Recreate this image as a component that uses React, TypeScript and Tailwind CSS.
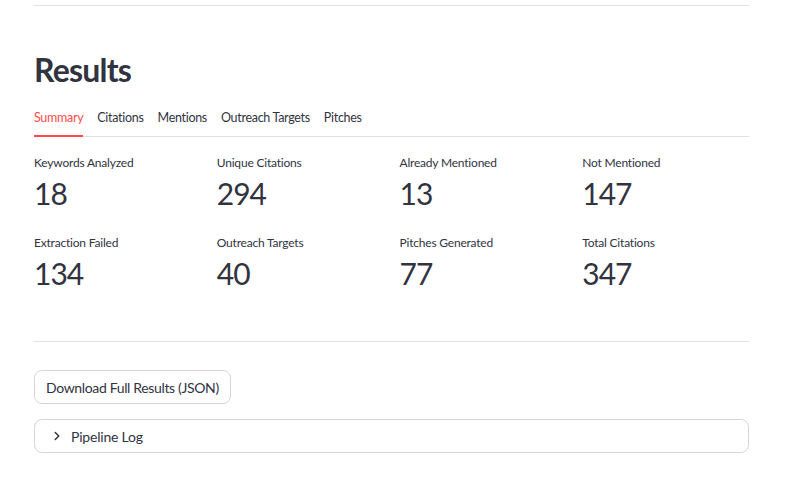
import React from "react";

const metrics = [
  ["Keywords Analyzed", "18"],
  ["Unique Citations", "294"],
  ["Already Mentioned", "13"],
  ["Not Mentioned", "147"],
  ["Extraction Failed", "134"],
  ["Outreach Targets", "40"],
  ["Pitches Generated", "77"],
  ["Total Citations", "347"],
];

const tabs = ["Summary", "Citations", "Mentions", "Outreach Targets", "Pitches"];

export default function App() {
  return (
    <div
      className="min-h-[499px] w-[806px] bg-white text-[#31333f]"
      style={{ fontFamily: "Lato, 'Noto Sans', sans-serif" }}
    >
      <div className="ml-[34px] w-[715px] pt-[5px]">
        <div className="h-px bg-[#e0e0e3]" />
        <h2 className="mt-[44px] text-[32px] font-bold leading-[40px] tracking-[-0.8px]">Results</h2>
        <div className="mt-[19px] relative">
          <div className="flex gap-[14px] text-[12.5px] leading-[18px] tracking-[-0.3px]">
            {tabs.map((t, i) => (
              <div key={t} className="relative pb-[9px]">
                <span className={i === 0 ? "text-[#ff4b4b]" : ""}>{t}</span>
                {i === 0 && <div className="absolute bottom-[-1px] left-0 right-0 h-[2px] bg-[#ff4b4b] z-10" />}
              </div>
            ))}
          </div>
          <div className="h-px bg-[#e0e0e3]" />
        </div>
        <div className="mt-[16px] grid grid-cols-4 gap-x-4 gap-y-[18px]">
          {metrics.map(([label, value]) => (
            <div key={label}>
              <div className="text-[12px] leading-[20px] tracking-[-0.2px]">{label}</div>
              <div className="text-[30px] leading-[42px] tracking-[-1px] -mt-[1px] mb-[1px]">{value}</div>
            </div>
          ))}
        </div>
        <div className="mt-[46px] h-px bg-[#e0e0e3]" />
        <button className="mt-[28px] flex h-[34px] items-center rounded-lg border border-[#d6d6d9] bg-white px-[11px] text-[14px] tracking-[-0.35px]">
          Download Full Results (JSON)
        </button>
        <div className="mt-[15px] flex h-[34px] items-center rounded-lg border border-[#d6d6d9] pl-[15px] text-[14px] tracking-[-0.2px]">
          <svg width="14" height="14" viewBox="0 0 24 24" fill="none" stroke="#31333f" strokeWidth="2.5" strokeLinecap="round" strokeLinejoin="round">
            <path d="M9 6l6 6-6 6" />
          </svg>
          <span className="ml-[7px]">Pipeline Log</span>
        </div>
      </div>
    </div>
  );
}
